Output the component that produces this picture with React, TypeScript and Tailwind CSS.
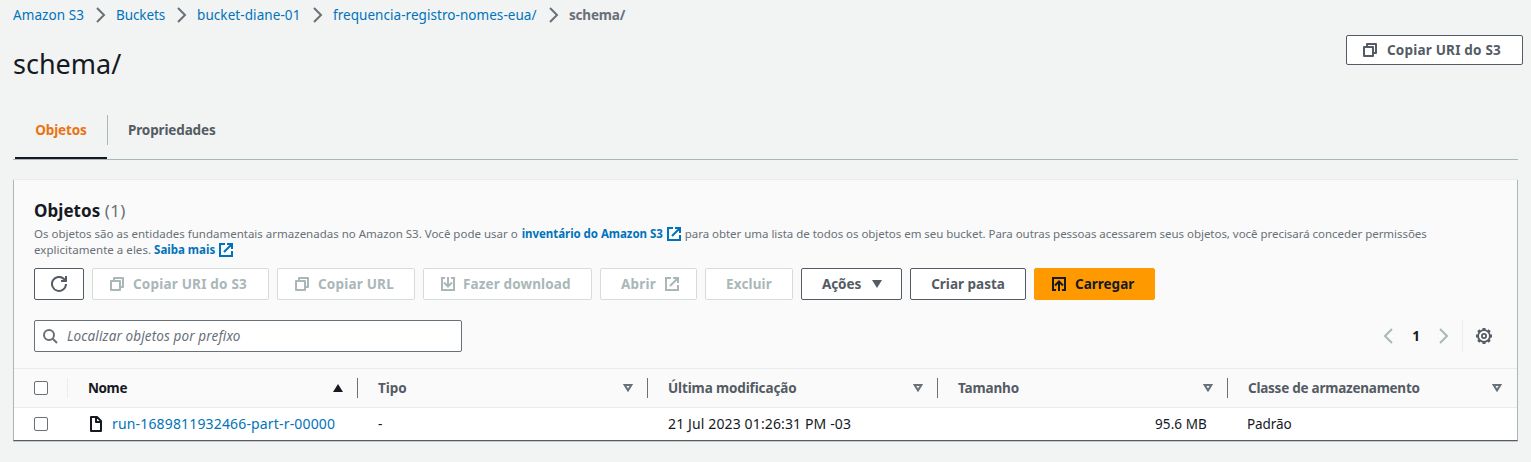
import type { ReactNode } from "react";

type IconProps = { className?: string };

function Svg({ className = "", children }: { className?: string; children: ReactNode }) {
  return (
    <svg viewBox="0 0 16 16" width="16" height="16" fill="none" stroke="currentColor" strokeWidth="2" className={`shrink-0 ${className}`}>
      {children}
    </svg>
  );
}

const Chevron = ({ className = "" }: IconProps) => (
  <Svg className={className}>
    <path d="M4 1l7 7-7 7" />
  </Svg>
);
const CopyIcon = ({ className = "" }: IconProps) => (
  <Svg className={className}>
    <path d="M2 5h9v9H2z" strokeLinejoin="round" />
    <path d="M5 5V2h9v9h-3" strokeLinejoin="round" />
  </Svg>
);
const ExternalIcon = ({ className = "" }: IconProps) => (
  <Svg className={className}>
    <path d="M7 2H2v12h12V9M9 2h5v5M14 2L6 10" />
  </Svg>
);
const DownloadIcon = ({ className = "" }: IconProps) => (
  <Svg className={className}>
    <path d="M5 2H2v12h12V2h-3M8 1v9M4 6.5l4 4 4-4" />
  </Svg>
);
const UploadIcon = ({ className = "" }: IconProps) => (
  <Svg className={className}>
    <path d="M5 14H2V2h12v12h-3M8 15V6M4 9.5l4-4 4 4" />
  </Svg>
);
const RefreshIcon = ({ className = "" }: IconProps) => (
  <Svg className={className}>
    <path d="M15 8a7 7 0 1 1-2-5l2 2M10 5h5V0" />
  </Svg>
);
const SearchIcon = ({ className = "" }: IconProps) => (
  <Svg className={className}>
    <circle cx="7" cy="7" r="5" />
    <path d="M10.5 10.5L15 15" />
  </Svg>
);
const FileIcon = ({ className = "" }: IconProps) => (
  <Svg className={className}>
    <path d="M3 1h6l4 4v10H3z M8 1v5h5" strokeLinejoin="round" />
  </Svg>
);
const GearIcon = ({ className = "" }: IconProps) => (
  <Svg className={className}>
    <circle cx="8" cy="8" r="5.9" strokeWidth="1.8" />
    <path d="M8 0v2M8 14v2M0 8h2M14 8h2M2.3 2.3l1.4 1.4M12.3 12.3l1.4 1.4M2.3 13.7l1.4-1.4M12.3 3.7l1.4-1.4" strokeWidth="3" />
    <circle cx="8" cy="8" r="2.1" strokeWidth="1.8" />
  </Svg>
);

function SortIcon({ filled }: { filled?: boolean }) {
  return filled ? (
    <svg viewBox="0 0 10 8" width="10" height="8" className="shrink-0 text-[#16191f]">
      <path d="M5 0l5 8H0z" fill="currentColor" />
    </svg>
  ) : (
    <svg viewBox="0 0 10 8" width="10" height="8" className="shrink-0 text-[#687078]">
      <path d="M1.6 1h6.8L5 6.4z" fill="none" stroke="currentColor" strokeWidth="2" />
    </svg>
  );
}

const crumbs = [
  { label: "Amazon S3", cls: "w-[80px] tracking-[0.08px]" },
  { label: "Buckets", cls: "w-[58px] tracking-[-0.1px]" },
  { label: "bucket-diane-01", cls: "w-[113px] tracking-[0.08px]" },
  { label: "frequencia-registro-nomes-eua/", cls: "w-[213px] tracking-[0.05px]" },
];

const variants = {
  normal: "border-[#545b64] bg-white text-[#545b64]",
  disabled: "border-[#d5dbdb] bg-white text-[#aab7b8]",
  primary: "border-[#ff9900] bg-[#ff9900] text-[#16191f]",
};

function Button({ variant = "normal", className = "", children }: { variant?: keyof typeof variants; className?: string; children: ReactNode }) {
  return (
    <button className={`flex shrink-0 items-center rounded-[2px] border text-[13.5px] font-bold whitespace-nowrap ${variants[variant]} ${className}`}>
      {children}
    </button>
  );
}

const Checkbox = () => <span className="size-[14px] shrink-0 rounded-[2px] border border-[#687078] bg-white" />;

const columns = [
  { label: "Tipo", cls: "", width: "w-[290px]" },
  { label: "Última modificação", cls: "tracking-[-0.13px]", width: "w-[290px]" },
  { label: "Tamanho", cls: "tracking-[-0.14px]", width: "w-[290px]" },
  { label: "Classe de armazenamento", cls: "tracking-[-0.24px]", width: "w-[289px]" },
];

export default function App() {
  return (
    <div className="h-[462px] w-[1531px] overflow-hidden bg-[#f2f3f3] font-['Noto_Sans',sans-serif] text-[13.5px] leading-5 text-[#16191f]">
      <nav className="flex h-[30px] items-center pl-[13px] whitespace-nowrap">
        {crumbs.map((c) => (
          <div key={c.label} className="flex items-center">
            <a className={`text-[#0073bb] ${c.cls}`}>{c.label}</a>
            <Chevron className="mr-[7px] text-[#687078]" />
          </div>
        ))}
        <span className="font-bold tracking-[-0.2px] text-[#687078]">schema/</span>
      </nav>

      <header className="flex h-[70px] items-start justify-between pr-2 pl-[13px]">
        <h1 className="pt-[14px] text-[27px] leading-10">schema/</h1>
        <Button className="mt-[5px] h-[30px] w-[177px] pl-[15px]">
          <CopyIcon className="mr-[9px]" />
          <span className="tracking-[0.2px]">Copiar URI do S3</span>
        </Button>
      </header>

      <div className="mr-[13px] ml-[13px] flex h-[60px] border-b border-[#aab7b8] pl-[2px] font-bold">
        <div className="flex h-[59px] w-[92px] justify-center border-b-2 border-[#16191f] pt-5 tracking-[-0.12px] text-[#ec7211]">Objetos</div>
        <div className="mt-[15px] h-[30px] w-px bg-[#aab7b8]" />
        <div className="pt-5 pl-5 tracking-[-0.14px] text-[#545b64]">Propriedades</div>
      </div>

      <section className="mt-5 mr-[13px] ml-[13px] h-[261px] border-x border-b border-x-[#aab7b8] border-b-[#545b64] bg-white shadow-[0_1px_0_#c5cccc,0_-1px_0_#eaeded]">
        <div className="h-[188px] bg-[#fafafa] px-5 pt-5">
          <h2 className="text-[17px] leading-[22px] font-bold tracking-[0.05px]">
            Objetos <span className="font-normal tracking-[0.35px] text-[#687078]">(1)</span>
          </h2>
          <div className="mt-1 text-[11.5px] leading-4 whitespace-nowrap text-[#687078]">
            <div className="flex">
              <span>Os objetos são as entidades fundamentais armazenadas no Amazon S3. Você pode usar o</span>
              <b className="ml-1 tracking-[-0.05px] text-[#0073bb]">inventário do Amazon S3</b>
              <ExternalIcon className="ml-[3px] text-[#0073bb]" />
              <span className="ml-[3px] tracking-[-0.037px]">
                para obter uma lista de todos os objetos em seu bucket. Para outras pessoas acessarem seus objetos, você precisará conceder permissões
              </span>
            </div>
            <div className="flex">
              <span className="tracking-[0.03px]">explicitamente a eles.</span>
              <b className="ml-[3px] text-[#0073bb]">Saiba mais</b>
              <ExternalIcon className="ml-[3px] text-[#0073bb]" />
            </div>
          </div>
          <div className="mt-[10px] flex gap-2">
            <Button className="h-8 w-[50px] justify-center">
              <RefreshIcon />
            </Button>
            <Button variant="disabled" className="h-8 w-[177px] pl-4">
              <CopyIcon className="mr-2" />
              <span className="tracking-[0.2px]">Copiar URI do S3</span>
            </Button>
            <Button variant="disabled" className="h-8 w-[138px] pl-4">
              <CopyIcon className="mr-2" />
              <span className="tracking-[0.2px]">Copiar URL</span>
            </Button>
            <Button variant="disabled" className="h-8 w-[169px] pl-4">
              <DownloadIcon className="mr-[7px]" />
              <span className="tracking-[0.13px]">Fazer download</span>
            </Button>
            <Button variant="disabled" className="h-8 w-[97px] pl-5">
              <span className="tracking-[0.2px]">Abrir</span>
              <ExternalIcon className="ml-2" />
            </Button>
            <Button variant="disabled" className="h-8 w-[88px] justify-center tracking-[0.15px]">Excluir</Button>
            <Button className="h-8 w-[101px] pl-5 tracking-[-0.1px]">
              Ações
              <svg viewBox="0 0 10 8" width="10" height="8" className="ml-[11px]">
                <path d="M0 0h10L5 8z" fill="currentColor" />
              </svg>
            </Button>
            <Button className="h-8 w-[116px] justify-center">Criar pasta</Button>
            <Button variant="primary" className="h-8 w-[121px] pl-4">
              <UploadIcon className="mr-2" />
              Carregar
            </Button>
          </div>
          <div className="mt-5 flex h-8 items-center justify-between">
            <div className="flex h-8 w-[428px] items-center rounded-[2px] border border-[#687078] bg-white pl-[7px]">
              <SearchIcon className="mr-[9px] text-[#687078]" />
              <span className="tracking-[0.12px] text-[#687078] italic">Localizar objetos por prefixo</span>
            </div>
            <div className="mr-[5px] flex items-center">
              <Chevron className="rotate-180 text-[#aab7b8]" />
              <b className="mx-4 w-2 text-center">1</b>
              <Chevron className="text-[#aab7b8]" />
              <span className="ml-[10px] h-8 w-px bg-[#eaeded]" />
              <GearIcon className="ml-[13px] text-[#545b64]" />
            </div>
          </div>
        </div>

        <div className="flex h-10 items-center border-y border-[#eaeded] bg-[#fafafa] font-bold text-[#545b64]">
          <div className="flex w-[53px] pl-5">
            <Checkbox />
          </div>
          <div className="flex h-5 w-[290px] items-center justify-between border-l border-[#eaeded] pr-[14px] pl-5">
            <span className="tracking-[-0.4px] text-[#16191f]">Nome</span>
            <SortIcon filled />
          </div>
          {columns.map((c) => (
            <div key={c.label} className={`flex h-5 items-center justify-between border-l border-[#687078] pr-[14px] pl-5 ${c.width}`}>
              <span className={c.cls}>{c.label}</span>
              <SortIcon />
            </div>
          ))}
        </div>

        <div className="flex h-8 items-center whitespace-nowrap">
          <div className="flex w-[74px] pl-5">
            <Checkbox />
          </div>
          <div className="flex w-[290px] items-center">
            <FileIcon className="mr-2" />
            <a className="text-[14px] tracking-[0.16px] text-[#0073bb]">run-1689811932466-part-r-00000</a>
          </div>
          <span className="w-[290px]">-</span>
          <span className="w-[289px] text-[14px] tracking-[0.13px]">21 Jul 2023 01:26:31 PM -03</span>
          <span className="w-[250px] text-right tracking-[0.1px]">95.6 MB</span>
          <span className="ml-10 tracking-[-0.1px]">Padrão</span>
        </div>
      </section>
    </div>
  );
}
